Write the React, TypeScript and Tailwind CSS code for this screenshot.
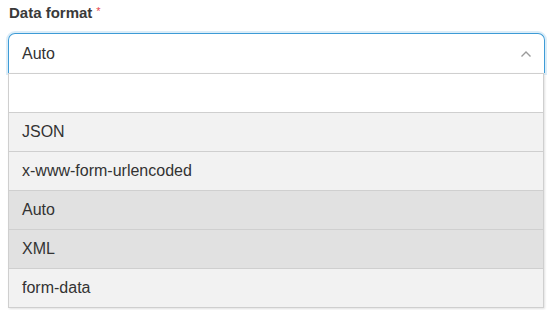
import React from "react";

const options = [
  { label: "JSON", active: false },
  { label: "x-www-form-urlencoded", active: false },
  { label: "Auto", active: true },
  { label: "XML", active: true },
  { label: "form-data", active: false },
];

export default function App() {
  return (
    <div className="w-[550px] h-[310px] bg-white px-2 pt-[3px] font-['Liberation_Sans',Arial,sans-serif] text-[#333]">
      <label className="flex items-start pl-px text-[15px] font-bold leading-[20px] text-[#3a3a3a]">
        Data format
        <span className="ml-[4px] -mt-[2px] text-[11px] font-normal text-[#e5484d]">*</span>
      </label>

      <div className="mt-[10px] w-[537px]">
        {/* Select control, open */}
        <div className="flex h-[40px] items-center justify-between rounded-t-[7px] border border-b-0 border-[#3d9bd6] pl-[13px] pr-[12px] shadow-[0_0_0_2px_rgba(61,155,214,0.18)]">
          <span className="text-[16px]">Auto</span>
          <svg width="12" height="8" viewBox="0 0 12 8" fill="none">
            <path d="M1.5 6.5 6 2l4.5 4.5" stroke="#9a9a9a" strokeWidth="1.4" />
          </svg>
        </div>

        {/* Menu */}
        <div className="w-[536px] border-x border-b border-[#cfcfcf] shadow-[1px_1px_2px_rgba(0,0,0,0.12)]">
          <div className="h-[39px] border-t border-[#cfcfcf] bg-white" />
          {options.map((o) => (
            <div
              key={o.label}
              className={`flex h-[39px] items-center border-t border-[#cfcfcf] pl-[13px] text-[16px] ${
                o.active ? "bg-[#e1e1e1]" : "bg-[#f2f2f2]"
              }`}
            >
              {o.label}
            </div>
          ))}
        </div>
      </div>
    </div>
  );
}
